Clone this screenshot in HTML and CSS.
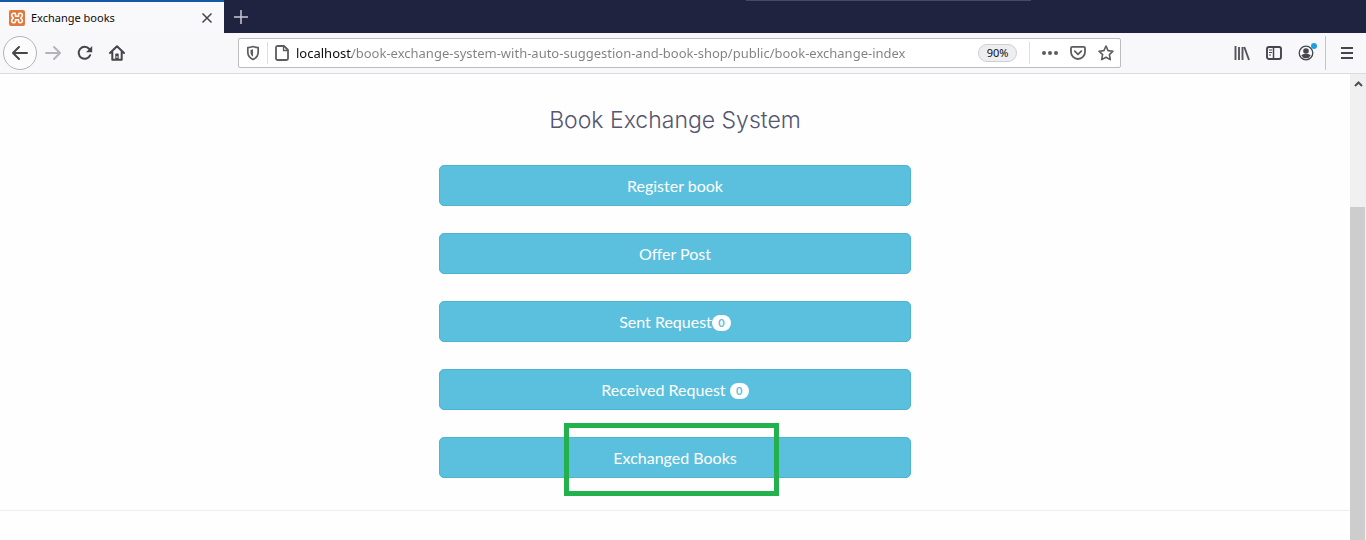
FILE: index.html
```html
<!DOCTYPE html>
<html lang="en">
<head>
<meta charset="utf-8">
<meta name="viewport" content="width=device-width, initial-scale=1">
<title>Exchange books</title>
<link rel="stylesheet" href="styles.css">
</head>
<body>
<div class="browser">
  <div class="tab-strip">
    <div class="tab">
      <svg class="favicon" width="16" height="16" viewBox="0 0 16 16" aria-hidden="true"><rect width="16" height="16" rx="2" fill="#e07a3c"/><path d="M6.200 3.200H4.500A2 2 0 0 0 3.200 6.600L4.200 8 3.200 9.400A2 2 0 0 0 4.500 12.800H5Q6.500 12.800 6.500 11.200V9.800H9.500V11.200Q9.500 12.800 11 12.800H11.500A2 2 0 0 0 12.800 9.400L11.800 8 12.800 6.600A2 2 0 0 0 11.500 3.200H11Q9.500 3.200 9.500 4.800V6.200H6.500V4.500Z" fill="none" stroke="#fff" stroke-width="1.600" stroke-linejoin="round"/></svg>
      <span class="tab-title">Exchange books</span>
      <button class="icon-button tab-close" type="button" aria-label="Close tab"><svg width="12" height="12" viewBox="0 0 12 12"><path d="M1.500 1.500l9 9M10.500 1.500l-9 9" stroke="#45454a" stroke-width="1.500"/></svg></button>
    </div>
    <button class="icon-button new-tab" type="button" aria-label="New tab"><svg width="14" height="14" viewBox="0 0 14 14"><path d="M7 0v14M0 7h14" stroke="#c9c9d2" stroke-width="1.500"/></svg></button>
    <div class="strip-accent"></div>
  </div>
  <div class="toolbar">
    <div class="nav-buttons">
      <button class="icon-button back" type="button" aria-label="Back"><svg width="18" height="16" viewBox="0 0 18 16"><path d="M16 8H2M8 2L2 8l6 6" fill="none" stroke="#45454a" stroke-width="2" stroke-linecap="round" stroke-linejoin="round"/></svg></button>
      <button class="icon-button" type="button" aria-label="Forward" disabled><svg width="18" height="16" viewBox="0 0 18 16"><path d="M2 8h14M10 2l6 6-6 6" fill="none" stroke="#b5b5b9" stroke-width="2" stroke-linecap="round" stroke-linejoin="round"/></svg></button>
      <button class="icon-button" type="button" aria-label="Reload"><svg width="16" height="16" viewBox="0 0 16 16"><path d="M13.200 10.200A6 6 0 1 1 12.300 4" fill="none" stroke="#45454a" stroke-width="2" stroke-linecap="round"/><path d="M15.200 1v6.200H9Z" fill="#45454a"/></svg></button>
      <button class="icon-button" type="button" aria-label="Home"><svg width="16" height="16" viewBox="0 0 16 16"><path d="M1 8l7-6.700L15 8M3.300 7v7.800h9.400V7" fill="none" stroke="#45454a" stroke-width="2" stroke-linecap="round" stroke-linejoin="round"/><path d="M6.300 14V9.500q0-1 1-1h1.400q1 0 1 1V14Z" fill="#45454a"/><path d="M8 11v2" stroke="#f9f9fa"/></svg></button>
    </div>
    <div class="address-bar">
      <button class="icon-button shield" type="button" aria-label="Site protections"><svg width="14" height="16" viewBox="0 0 14 16"><path d="M7 1.500c2 .7 3.600 1 5.200 1.200V7c0 3.500-2 6-5.200 7.500C3.800 13 1.800 10.500 1.800 7V2.700C3.400 2.500 5 2.200 7 1.500Z" fill="none" stroke="#5c5c60" stroke-width="1.700" stroke-linejoin="round"/><path d="M7 4.300v7.400C5.200 10.600 4.500 9 4.500 7V5Z" fill="#5c5c60"/></svg></button>
      <span class="divider"></span>
      <svg class="page-icon" width="14" height="16" viewBox="0 0 14 16" aria-hidden="true"><path d="M3 1h6l4 4v8.500q0 1.500-1.500 1.500h-8.500Q1 15 1 13.500v-11Q1 1 3 1Z" fill="none" stroke="#5c5c60" stroke-width="1.800" stroke-linejoin="round"/><path d="M8.500 1v4.500H13" fill="none" stroke="#5c5c60" stroke-width="1.300"/></svg>
      <input class="url" type="text" aria-label="Address" spellcheck="false" value="localhost/book-exchange-system-with-auto-suggestion-and-book-shop/public/book-exchange-index">
      <button class="zoom-level" type="button">90%</button>
      <span class="divider"></span>
      <div class="page-actions">
        <button class="icon-button" type="button" aria-label="Page actions"><svg width="16" height="16" viewBox="0 0 16 16" fill="#5c5c60"><circle cx="2" cy="8" r="2"/><circle cx="8" cy="8" r="2"/><circle cx="14" cy="8" r="2"/></svg></button>
        <button class="icon-button" type="button" aria-label="Save to Pocket"><svg width="16" height="16" viewBox="0 0 16 16" fill="none" stroke="#5c5c60" stroke-width="1.800" stroke-linecap="round" stroke-linejoin="round"><path d="M2.200 1.800h11.600q1.200 0 1.200 1.200v4a7 7 0 0 1-14 0V3q0-1.200 1.200-1.200Z"/><path d="M4.700 6.200L8 9.300l3.300-3.100"/></svg></button>
        <button class="icon-button" type="button" aria-label="Bookmark this page"><svg width="16" height="16" viewBox="0 0 16 16"><path d="M8 1l2.100 4.600 4.900.6-3.600 3.400.9 5L8 12.200l-4.300 2.400.9-5L1 6.200l4.900-.6Z" fill="none" stroke="#5c5c60" stroke-width="1.600" stroke-linejoin="round"/></svg></button>
      </div>
    </div>
    <div class="tool-buttons">
      <button class="icon-button" type="button" aria-label="Library"><svg width="16" height="16" viewBox="0 0 16 16"><path d="M1.500 1v14M5 2v13M8.500 2v13M10.300 2l4.700 13" fill="none" stroke="#55555a" stroke-width="1.900"/></svg></button>
      <button class="icon-button" type="button" aria-label="Sidebars"><svg width="16" height="16" viewBox="0 0 16 16"><rect x="1" y="2" width="14" height="12" rx="2" fill="none" stroke="#45454a" stroke-width="1.900"/><path d="M7.500 2v12" stroke="#45454a" stroke-width="1.500"/><path d="M3 5h3M3 7.500h3M3 10h2" stroke="#45454a"/></svg></button>
      <button class="icon-button account" type="button" aria-label="Account"><svg width="16" height="16" viewBox="0 0 16 16"><circle cx="8" cy="8" r="6.800" fill="none" stroke="#45454a" stroke-width="1.300"/><circle cx="8" cy="6" r="2.800" fill="#45454a"/><path d="M3.300 10.500q1.400-1.700 3-1.500h3.400q1.600-.2 3 1.500Q11 13.300 8 13.300t-4.700-2.800Z" fill="#45454a"/></svg><span class="dot"></span></button>
    </div>
    <div class="menu-area">
      <button class="icon-button" type="button" aria-label="Menu"><svg width="14" height="14" viewBox="0 0 14 14"><path d="M1 2h12M1 7h12M1 12h12" stroke="#45454a" stroke-width="2"/></svg></button>
    </div>
  </div>
  <div class="viewport">
    <main class="page">
      <h1 class="heading">Book Exchange System</h1>
      <div class="actions">
        <button class="action" type="button">Register book</button>
        <button class="action" type="button">Offer Post</button>
        <button class="action" type="button">Sent Request<span class="badge">0</span></button>
        <button class="action" type="button">Received Request <span class="badge">0</span></button>
        <button class="action highlighted" type="button">Exchanged Books</button>
      </div>
      <hr class="rule">
    </main>
    <div class="scrollbar">
      <svg class="scroll-arrow" width="9" height="8" viewBox="0 0 9 8" aria-hidden="true"><path d="M1 6l3.500-3.500L8 6" fill="none" stroke="#505050" stroke-width="2"/></svg>
      <div class="scroll-thumb"></div>
    </div>
  </div>
</div>
</body>
</html>
```
FILE: styles.css
```css
*,
*::after {
  box-sizing: border-box;
}

body {
  margin: 0;
  background: #fefefe;
  font-family: "Noto Sans", "Open Sans", sans-serif;
}

button,
input {
  margin: 0;
  padding: 0;
  border: 0;
  background: none;
  font: inherit;
}

svg {
  display: block;
}

.browser {
  display: flex;
  flex-direction: column;
  min-height: 100vh;
}

.icon-button {
  display: flex;
  align-items: center;
  justify-content: center;
  flex: none;
}

.tab-strip {
  position: relative;
  display: flex;
  height: 33px;
  background: #20233f;
}

.tab {
  display: flex;
  align-items: center;
  width: 224px;
  padding: 0 10px 0 9px;
  border-top: 2px solid #1558a6;
  background: #f9f9fb;
}

.tab-title {
  flex: 1;
  margin-left: 6px;
  font-size: 11px;
  line-height: 16px;
  color: #0c0c0d;
}

.tab-close {
  width: 14px;
  height: 14px;
}

.new-tab {
  width: 34px;
}

.strip-accent {
  position: absolute;
  top: 0;
  left: 746px;
  width: 285px;
  height: 1px;
  background: #454963;
}

.toolbar {
  display: flex;
  align-items: center;
  height: 41px;
  padding-left: 3px;
  border-bottom: 1px solid #dcdcde;
  background: #f8f8fa;
}

.nav-buttons {
  display: flex;
  align-items: center;
  width: 235px;
}

.nav-buttons .icon-button {
  width: 32px;
  height: 32px;
}

.nav-buttons .back {
  width: 34px;
  height: 34px;
  border: 1px solid #b4b4b7;
  border-radius: 50%;
  background: #fcfcfd;
}

.address-bar {
  display: flex;
  align-items: center;
  flex: 1;
  height: 30px;
  border: 1px solid #bcbcbf;
  border-radius: 2px;
  background: #fff;
}

.shield {
  width: 28px;
}

.divider {
  width: 1px;
  height: 22px;
  background: #dedee0;
}

.page-icon {
  margin: 0 7px;
}

.url {
  flex: 1;
  min-width: 0;
  height: 24px;
  font-size: 13px;
  color: transparent;
  caret-color: #0c0c0d;
  background-image: linear-gradient(90deg, #0c0c0d 56px, #808083 56px);
  background-clip: text;
  -webkit-background-clip: text;
}

.zoom-level {
  width: 39px;
  height: 18px;
  margin-right: 12px;
  border: 1px solid #cfcfd1;
  border-radius: 9px;
  background: #eeeef0;
  font-size: 11px;
  line-height: 16px;
  color: #0c0c0d;
}

.page-actions {
  display: flex;
  gap: 12px;
  margin: 0 6px 0 12px;
}

.tool-buttons {
  display: flex;
  gap: 16px;
  margin: 0 11px 0 113px;
}

.account {
  position: relative;
}

.dot {
  position: absolute;
  top: -2px;
  right: -3px;
  width: 6px;
  height: 6px;
  border-radius: 50%;
  background: #1ba1e2;
}

.menu-area {
  display: flex;
  align-items: center;
  width: 41px;
  height: 34px;
  padding-left: 14px;
  border-left: 1px solid #c4c4c7;
}

.viewport {
  display: flex;
  flex: 1;
}

.page {
  flex: 1;
}

.heading {
  margin: 31px 0 30px;
  font-family: Inter, "Open Sans", sans-serif;
  font-size: 23px;
  font-weight: 300;
  line-height: 30px;
  text-align: center;
  color: #55566f;
}

.actions {
  display: flex;
  flex-direction: column;
  gap: 27px;
  width: 35%;
  min-width: 280px;
  margin: 0 auto;
}

.action {
  position: relative;
  padding: 9px 12px;
  border: 1px solid #4cb5d0;
  border-radius: 5px;
  background: #5bc0de;
  font-family: Lato, sans-serif;
  font-size: 16px;
  line-height: 21px;
  color: #fff;
}

.badge {
  display: inline-block;
  min-width: 19px;
  padding: 0 6px;
  border-radius: 8px;
  background: #fff;
  font-size: 11px;
  font-weight: 700;
  line-height: 16px;
  vertical-align: 1px;
  color: #5bc0de;
}

.highlighted::after {
  content: "";
  position: absolute;
  top: -15px;
  left: 50%;
  width: 215px;
  height: 73px;
  margin-left: -111px;
  border: 5px solid #22b14c;
}

.rule {
  height: 1px;
  margin: 32px 0 0;
  border: 0;
  background: #eeeeef;
}

.scrollbar {
  display: flex;
  flex-direction: column;
  align-items: center;
  width: 16px;
  padding-top: 6px;
  background: #f0f0f0;
}

.scroll-thumb {
  flex: 1;
  align-self: stretch;
  margin: 119px 1px 0 0;
  background: #cdcdcd;
}
```
